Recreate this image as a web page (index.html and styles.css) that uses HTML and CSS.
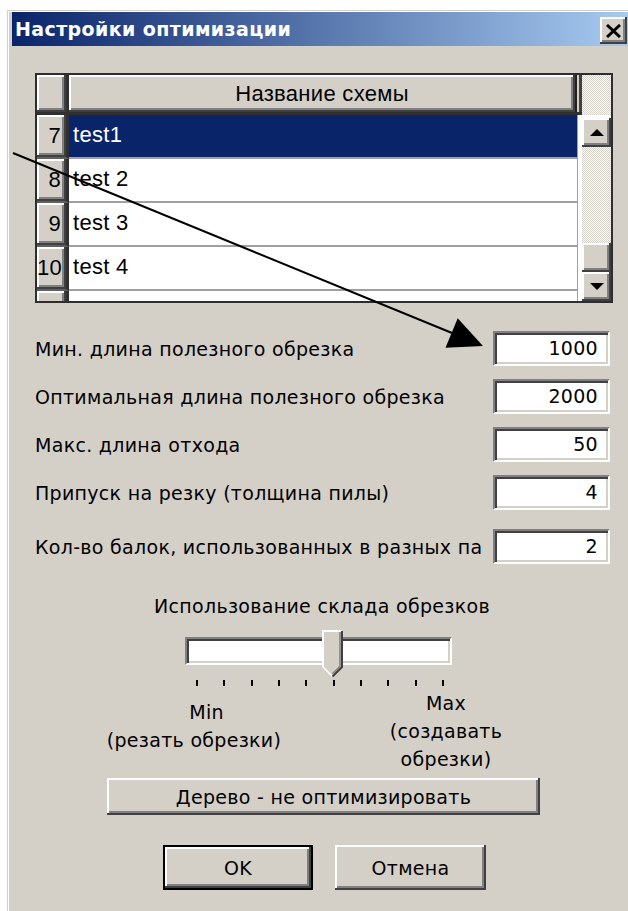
FILE: index.html
```html
<!DOCTYPE html>
<html lang="ru">
<head>
<meta charset="utf-8">
<title>Настройки оптимизации</title>
<link rel="stylesheet" href="styles.css">
</head>
<body>
<div class="window">
  <div class="titlebar">
    <span class="title">Настройки оптимизации</span>
    <button class="close raised" aria-label="Закрыть">
      <svg width="15" height="14" viewBox="0 0 15 14"><path d="M1 1 L14 13 M14 1 L1 13" stroke="#000" stroke-width="3" fill="none"/></svg>
    </button>
  </div>

  <div class="content">
    <div class="grid">
      <div class="grid-main">
        <div class="grid-head">
          <div class="ind raised"></div>
          <div class="col-head raised">Название схемы</div>
          <div class="head-rest"></div>
        </div>
        <div class="grid-row selected"><div class="ind raised">7</div><div class="cell">test1</div><div class="gap"></div></div>
        <div class="grid-row"><div class="ind raised">8</div><div class="cell">test 2</div><div class="gap"></div></div>
        <div class="grid-row"><div class="ind raised">9</div><div class="cell">test 3</div><div class="gap"></div></div>
        <div class="grid-row"><div class="ind raised">10</div><div class="cell">test 4</div><div class="gap"></div></div>
        <div class="grid-row"><div class="ind raised"></div><div class="cell"></div><div class="gap"></div></div>
      </div>
      <div class="vscroll">
        <div class="vs-top"></div>
        <div class="vs-gap"></div>
        <div class="vs-btn raised"><svg width="14" height="7" viewBox="0 0 14 7"><path d="M7 0 L14 7 L0 7 Z" fill="#000"/></svg></div>
        <div class="vs-track"></div>
        <div class="vs-thumb raised"></div>
        <div class="vs-btn raised"><svg width="14" height="7" viewBox="0 0 14 7"><path d="M0 0 L14 0 L7 7 Z" fill="#000"/></svg></div>
      </div>
    </div>

    <div class="fields">
      <div class="field"><span class="label">Мин. длина полезного обрезка</span><div class="num">1000</div></div>
      <div class="field"><span class="label">Оптимальная длина полезного обрезка</span><div class="num">2000</div></div>
      <div class="field"><span class="label">Макс. длина отхода</span><div class="num">50</div></div>
      <div class="field"><span class="label">Припуск на резку (толщина пилы)</span><div class="num">4</div></div>
      <div class="field field-last"><span class="label">Кол-во балок, использованных в разных па</span><div class="num">2</div></div>
    </div>

    <div class="usage">
      <div class="usage-title">Использование склада обрезков</div>
      <div class="slider">
        <div class="slider-track"></div>
        <svg class="slider-thumb" width="21" height="48" viewBox="0 0 21 48">
          <path d="M0 0 H21 V37 L10.5 47.5 L0 37 Z" fill="#d4d0c8"/>
          <path d="M1 37 V1 H20" stroke="#fff" stroke-width="2" fill="none"/>
          <path d="M1 37 L10.5 46.5" stroke="#fff" stroke-width="1.5" fill="none"/>
          <path d="M20 1 V37 L10.5 46.5" stroke="#404040" stroke-width="2" fill="none"/>
          <path d="M18 2 V36.2 L10.5 43.7" stroke="#808080" stroke-width="1.5" fill="none"/>
        </svg>
      </div>
      <div class="ticks"><i></i><i></i><i></i><i></i><i></i><i></i><i></i><i></i><i></i><i></i></div>
      <div class="usage-ends">
        <div class="end-min"><span class="min">Min</span><br>(резать обрезки)</div>
        <div class="end-max">Max<br>(создавать<br>обрезки)</div>
      </div>
    </div>

    <button class="btn btn-wide raised">Дерево - не оптимизировать</button>
    <div class="actions">
      <button class="btn btn-ok raised">OK</button>
      <button class="btn btn-cancel raised">Отмена</button>
    </div>
  </div>
</div>

<!-- annotation arrow drawn over the dialog -->
<svg class="pointer" width="628" height="911" viewBox="0 0 628 911">
  <line x1="13" y1="153" x2="452" y2="333" stroke="#000" stroke-width="2"/>
  <polygon points="483,346 445.5,347.8 457.7,318.2" fill="#000"/>
</svg>
</body>
</html>
```

FILE: styles.css
```css
* { box-sizing: border-box; }

html, body {
  margin: 0;
  padding: 0;
  overflow: hidden;
  background: #fff;
}

body {
  position: relative;
  width: 628px;
  height: 911px;
  font-family: "DejaVu Sans", Tahoma, sans-serif;
  font-size: 19px;
  letter-spacing: 0.3px;
  color: #000;
}

/* classic 3D bevels */
.raised {
  background: #d4d0c8;
  box-shadow: inset -2px -2px #404040, inset 2px 2px #ffffff, inset -4px -4px #808080;
}

/* dialog frame */
.window {
  margin: 10px 0 0 7px;
  width: 621px;
  height: 901px;
  background: #d4d0c8;
  border-top: 1px solid #d4d0c8;
  border-left: 1px solid #d4d0c8;
  box-shadow: inset 1px 1px #fff;
  padding: 1px 0 0 4px;
}

.titlebar {
  height: 34px;
  width: 616px;
  display: flex;
  align-items: center;
  justify-content: space-between;
  padding-left: 3px;
  background: linear-gradient(to right, #0a246a, #a6caf0);
}

.title {
  color: #fff;
  font-weight: bold;
  font-size: 19px;
  letter-spacing: 0.4px;
  white-space: nowrap;
}

.close {
  align-self: flex-end;
  margin: 0 1px 2px 0;
  width: 27px;
  height: 27px;
  border: 0;
  padding: 0;
  display: flex;
  align-items: center;
  justify-content: center;
}

.content {
  padding: 27px 0 0 23px;
}

/* data grid */
.grid {
  width: 578px;
  height: 230px;
  border: 2px solid #2e2e2e;
  display: flex;
  background: #fff;
  overflow: hidden;
}

.grid-main {
  width: 545px;
  overflow: hidden;
  font-family: "Liberation Sans", Arial, sans-serif;
  font-size: 22px;
  letter-spacing: 0.3px;
}

.grid-head {
  display: flex;
  height: 40px;
  border-bottom: 3px solid #303030;
}

.ind {
  width: 32px;
  flex: none;
  border-right: 3px solid #303030;
  text-align: right;
  padding-right: 5px;
}

.col-head {
  width: 506px;
  flex: none;
  text-align: center;
  line-height: 37px;
}

.head-rest {
  width: 7px;
  flex: none;
  background: linear-gradient(to right, #202020 0 2px, #d4d0c8 2px 4px, #404040 4px);
}

.grid-row {
  display: flex;
  height: 44px;
}

.grid-row .ind {
  line-height: 42px;
  border-bottom: 2px solid #606060;
}

.cell {
  width: 509px;
  flex: none;
  padding-left: 4px;
  line-height: 40px;
  border-right: 1px solid #a0a0a0;
  border-bottom: 2px solid #a0a0a0;
  white-space: nowrap;
}

.gap { flex: 1; background: #fff; }

.selected .cell {
  background: #0a246a;
  color: #fff;
}

/* vertical scrollbar */
.vscroll {
  width: 29px;
  display: flex;
  flex-direction: column;
}

.vs-top, .vs-track {
  background: repeating-conic-gradient(#d4d0c8 0 25%, #ffffff 0 50%) 0 0 / 2px 2px;
}

.vs-top { height: 40px; }
.vs-gap { height: 3px; background: #fff; }
.vs-track { height: 96px; }
.vs-thumb { height: 29px; }

.vs-btn {
  height: 29px;
  display: flex;
  align-items: center;
  justify-content: center;
}

/* numeric fields */
.fields {
  width: 575px;
  margin-top: 28px;
  display: flex;
  flex-direction: column;
  gap: 13px;
}

.field {
  display: flex;
  align-items: center;
  justify-content: space-between;
  height: 35px;
}

.field-last { margin-top: 6px; }

.label {
  white-space: nowrap;
  overflow: hidden;
}

.num {
  width: 117px;
  height: 35px;
  flex: none;
  background: #fff;
  border: 2px solid;
  border-color: #808080 #ffffff #ffffff #808080;
  box-shadow: inset 2px 2px #404040, inset -2px -2px #d4d0c8;
  text-align: right;
  padding-right: 10px;
  line-height: 31px;
}

/* scrap-stock slider */
.usage {
  width: 578px;
  margin-top: 30px;
}

.usage-title {
  text-align: center;
  line-height: 24px;
  padding-right: 4px;
}

.slider {
  position: relative;
  margin: 19px 0 0 150px;
  width: 267px;
  height: 28px;
}

.slider-track {
  height: 28px;
  background: #fff;
  border: 2px solid;
  border-color: #808080 #ffffff #ffffff #808080;
  box-shadow: inset 2px 2px #404040, inset -2px -2px #d4d0c8;
}

.slider-thumb {
  position: absolute;
  left: 137px;
  top: -7px;
}

.ticks {
  margin: 15px 0 0 161px;
  width: 248px;
  height: 6px;
  display: flex;
  justify-content: space-between;
}

.ticks i {
  width: 2px;
  height: 6px;
  background: #000;
}

.usage-ends {
  display: flex;
  align-items: flex-start;
  line-height: 28px;
  text-align: center;
}

.end-min {
  margin: 12px 0 0 66px;
  width: 186px;
}

.min { padding-left: 25px; }

.end-max {
  margin: 3px 0 0 94px;
  width: 130px;
}

/* push buttons */
.btn {
  border: 0;
  padding: 0;
  font: inherit;
  letter-spacing: inherit;
  color: #000;
  display: block;
}

.btn-wide {
  margin: 5px 0 0 72px;
  width: 433px;
  height: 37px;
}

.actions {
  display: flex;
  margin-top: 30px;
}

.btn-ok {
  margin-left: 128px;
  width: 150px;
  height: 45px;
  border: 2px solid #000;
}

.btn-cancel {
  margin-left: 22px;
  width: 151px;
  height: 45px;
}

/* callout arrow */
.pointer {
  position: absolute;
  left: 0;
  top: 0;
  pointer-events: none;
}
```
